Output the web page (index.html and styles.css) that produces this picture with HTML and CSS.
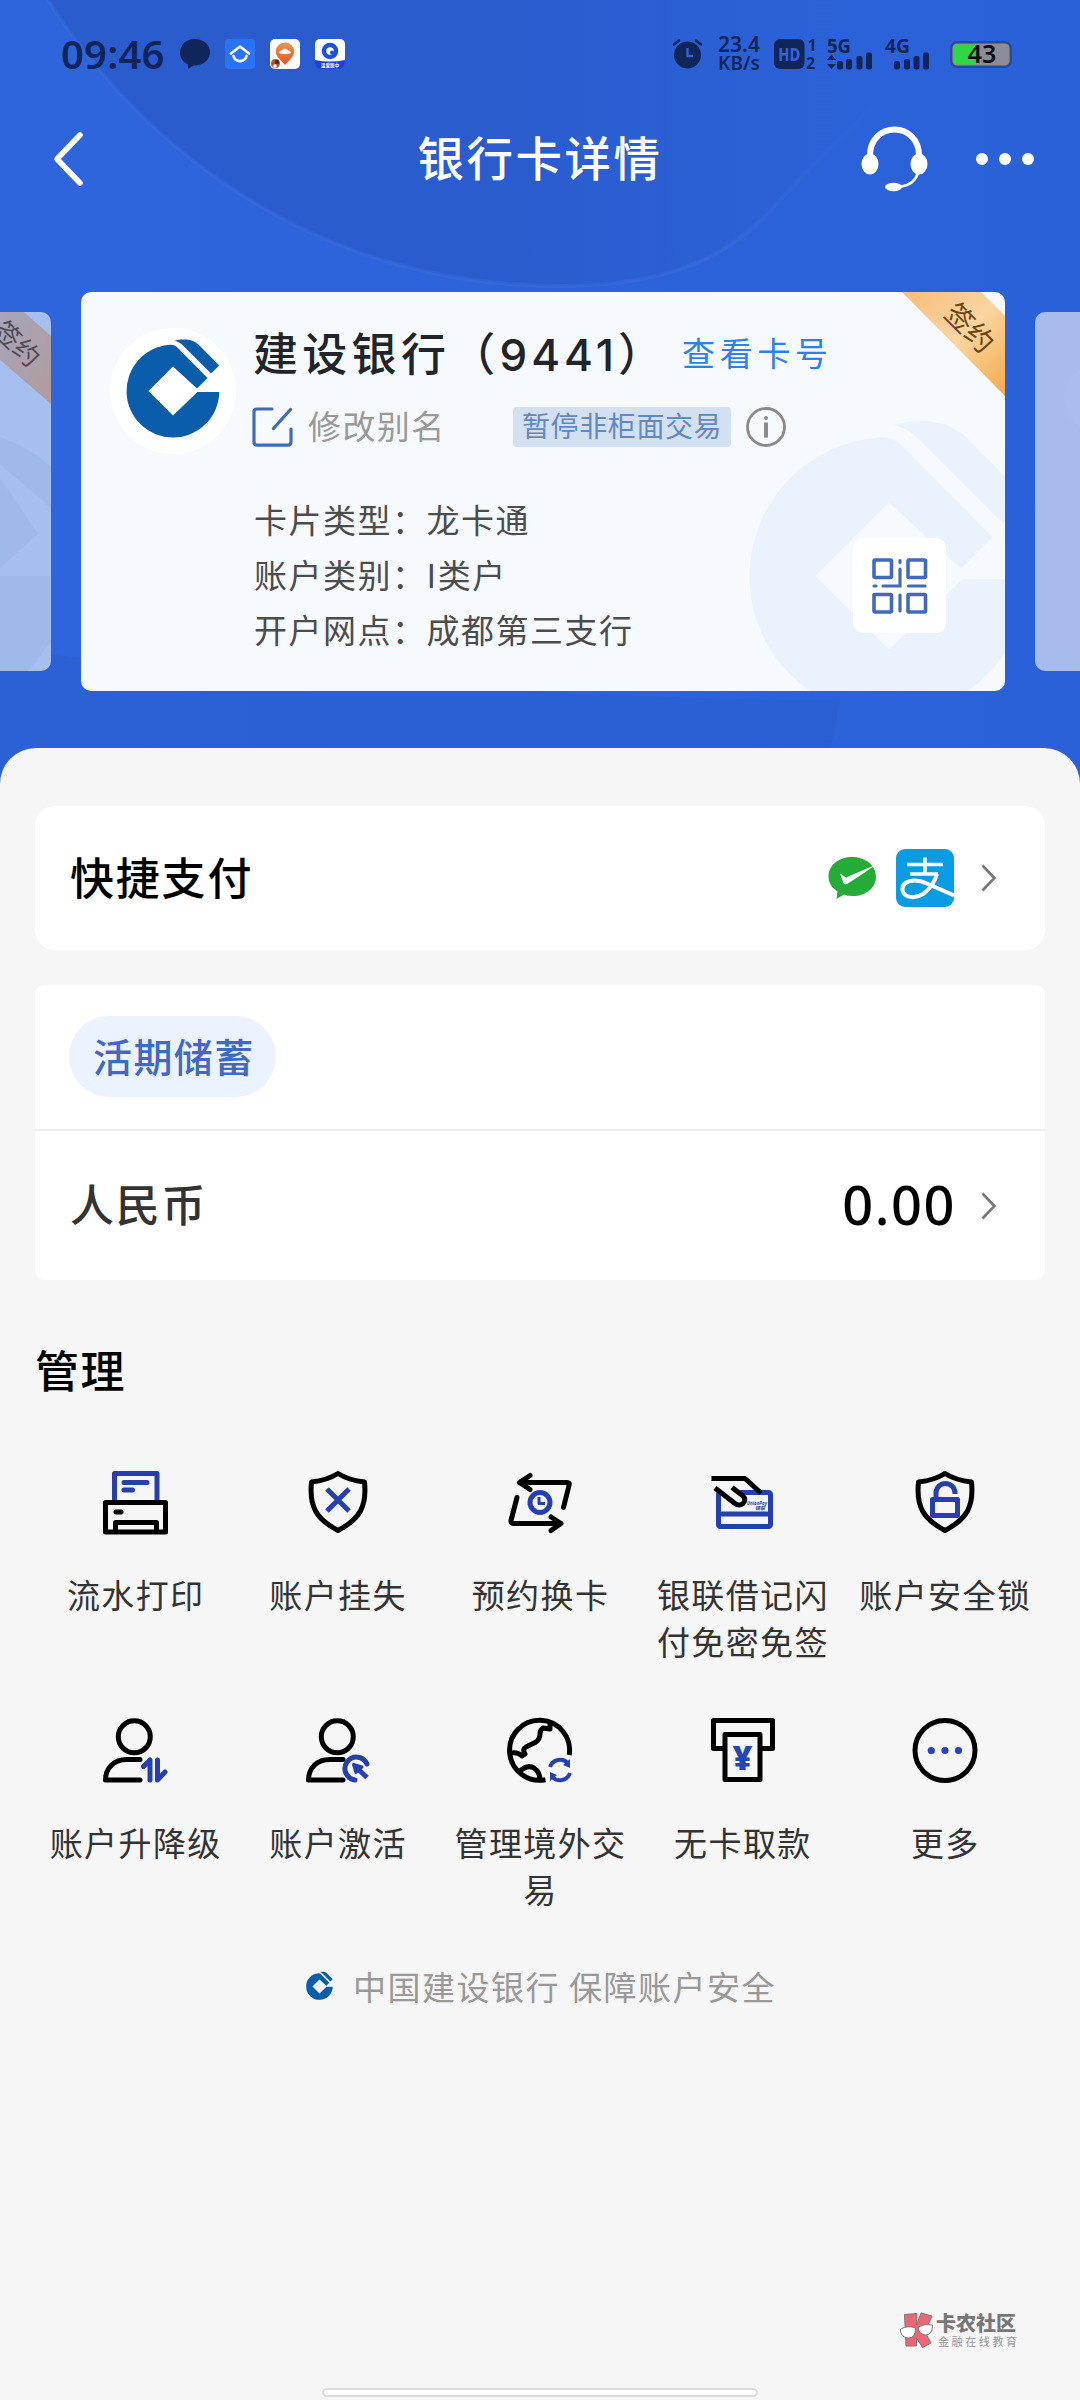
FILE: index.html
```html
<!DOCTYPE html>
<html lang="zh-CN">
<head>
<meta charset="utf-8">
<title>银行卡详情</title>
<link rel="stylesheet" href="styles.css">
</head>
<body>
<svg class="defs" width="0" height="0" aria-hidden="true">
  <defs>
    <linearGradient id="sky" x1="0" x2="1"><stop offset="0" stop-color="#2e65dd"/><stop offset="1" stop-color="#2b61d8"/></linearGradient>
    <linearGradient id="orb" x1="0" x2="1"><stop offset=".55" stop-color="#2a5cce"/><stop offset="1" stop-color="#2a5cce" stop-opacity="0"/></linearGradient>
    <linearGradient id="rim" x1="0" x2="1"><stop offset="0" stop-color="#4674e2" stop-opacity=".25"/><stop offset=".8" stop-color="#4674e2" stop-opacity=".3"/><stop offset="1" stop-color="#4674e2" stop-opacity="0"/></linearGradient>
    <linearGradient id="gold" x1="0" y1="0" x2="1" y2="1"><stop offset="0" stop-color="#f6bc7c"/><stop offset=".5" stop-color="#fbd5a0"/><stop offset="1" stop-color="#f3ab4c"/></linearGradient>
    <linearGradient id="dusk" x1="0" y1="0" x2="1" y2="1"><stop offset="0" stop-color="#a7a5ba"/><stop offset="1" stop-color="#b09c9c"/></linearGradient>
    <linearGradient id="pin" x1="0" y1="0" x2="0" y2="1"><stop offset="0" stop-color="#dd9a58"/><stop offset="1" stop-color="#e8541f"/></linearGradient>
    <symbol id="ccb" viewBox="-54 -54 108 108">
      <path d="M0-24.5-24.5 0 0 24.500 24.500 1H46.300A46.400 46.400 0 1 1-3-46.200C2-46.500 4.500-43.500 7.500-40.200L34.500-13 24-2.500Z"/>
      <path d="M1.500-50.300C5-51.500 9-51.800 13.500-51.500 18.500-51 22-49.500 25.500-46.500L46.200-25.500 38-17.500 10-45.500C7.500-48 5-49.500 1.500-50.300Z"/>
    </symbol>
    <symbol id="shield" viewBox="0 0 72 72">
      <path d="M36 7.500C28 12.500 19 15 9.500 16 7 40 14 53 36 64.500 58 53 65 40 62.500 16 53 15 44 12.500 36 7.500Z"/>
    </symbol>
    <symbol id="user" viewBox="0 0 72 72">
      <circle cx="35.300" cy="22.800" r="16"/><path d="M41 45.500H28C15 45.500 6.500 54 6.500 66H41"/>
    </symbol>
  </defs>
</svg>

<header class="top">
  <svg class="sky" viewBox="0 0 1080 800" width="1080" height="800">
    <rect width="1080" height="800" fill="url(#sky)"/>
    <path d="M48 0C130 130 300 286 560 286 680 286 735 250 775 206 815 160 850 130 880 100V0Z" fill="url(#orb)"/>
    <path d="M48 0C130 130 300 286 560 286 680 286 735 250 775 206 815 160 850 130 880 100" fill="none" stroke="url(#rim)" stroke-width="4"/>
    <path d="M0 650Q500 700 840 700L820 800H0Z" fill="#2a5cce" opacity=".5"/>
  </svg>

  <div class="status">
    <span class="time">09:46</span>
    <svg class="bubble" width="30" height="30" viewBox="0 0 30 30"><path d="M15 0C23.500 0 30 5.800 30 13S24 26.500 13.500 26.500L8 30V25.500C3 23.500 0 18.500 0 13.500 0 5.800 6.500 0 15 0Z" fill="#10265a"/></svg>
    <svg class="app" width="30" height="30" viewBox="0 0 30 30"><rect width="30" height="30" rx="4" fill="#2b73f5"/><path d="M6 14.500 15 7.500 24 14.500M8.500 17A6.700 6.700 0 0 0 21.500 17" fill="none" stroke="#fff" stroke-width="2.600" stroke-linecap="round" stroke-linejoin="round"/></svg>
    <svg class="app" width="30" height="30" viewBox="0 0 30 30"><rect width="30" height="30" rx="5" fill="#fdfdfa"/><path d="M15 3.500A9.300 9.300 0 0 1 24.300 12.500C24.300 18 18 22 15 26 12 22 5.700 18 5.700 12.500A9.300 9.300 0 0 1 15 3.500Z" fill="url(#pin)"/><path d="M9 14c0-2 2-2.500 3-2.500 1-2.500 5-2.500 6 0 2 0 3 1 3 2.500-2 1.500-10 1.500-12 0Z" fill="#fff"/><circle cx="5.500" cy="24.500" r="4.500" fill="#b5572a"/><circle cx="7" cy="23" r="2.200" fill="#4a2a1c"/><circle cx="5" cy="27" r="1.800" fill="#fff"/></svg>
    <svg class="app" width="30" height="30" viewBox="0 0 30 30"><rect width="30" height="28" rx="5" fill="#fff"/><path d="M0 21Q15 24 30 21V25Q28 30 23 30H7Q2 30 0 25Z" fill="#1f3fe0"/><circle cx="15" cy="12" r="6" fill="none" stroke="#1d4fd8" stroke-width="4.500"/><circle cx="17" cy="13.500" r="2" fill="#1d4fd8"/><text x="15" y="28" font-size="4.600" font-weight="700" fill="#fff" text-anchor="middle">温爱医中</text></svg>
    <svg class="alarm" width="29" height="30" viewBox="0 0 29 30"><circle cx="14.500" cy="16" r="13.500" fill="#10265a"/><path d="M1 5.500 6 1.500M28 5.500 23 1.500" stroke="#10265a" stroke-width="2.500" stroke-linecap="round"/><path d="M14.500 9V17H20" fill="none" stroke="#3564cf" stroke-width="2.400"/></svg>
    <div class="rate"><span>23.4</span><span>KB/s</span></div>
    <svg class="hd" width="42" height="30" viewBox="0 0 42 30"><rect width="30.500" height="30" rx="6" fill="#10265a"/><text x="15.200" y="21.500" font-size="18" font-weight="800" fill="#3564cf" text-anchor="middle" textLength="22" lengthAdjust="spacingAndGlyphs">HD</text><g fill="#10265a" font-size="16" font-weight="700"><text x="33.500" y="12">1</text><text x="32" y="29.500">2</text></g></svg>
    <svg class="sig" width="46" height="32" viewBox="0 0 46 32"><text x="0" y="15" font-size="19" font-weight="700" fill="#10265a" textLength="24" lengthAdjust="spacingAndGlyphs">5G</text><g fill="#10265a"><path d="M0 22 4.500 16.500 9 22ZM0 26 4.500 31 9 26Z"/><rect x="10" y="23" width="6" height="8.500" rx="2"/><rect x="19" y="21" width="6" height="10.500" rx="2"/><rect x="29.500" y="18" width="6" height="13.500" rx="2"/><rect x="39" y="14.500" width="6" height="17" rx="2"/></g></svg>
    <svg class="sig" width="46" height="32" viewBox="0 0 46 32"><text x="0" y="15" font-size="19" font-weight="700" fill="#10265a" textLength="25" lengthAdjust="spacingAndGlyphs">4G</text><g fill="#10265a"><rect x="9" y="23" width="6" height="8.500" rx="2"/><rect x="19" y="21" width="6" height="10.500" rx="2"/><rect x="28.500" y="18" width="6" height="13.500" rx="2"/><rect x="38" y="14.500" width="6" height="17" rx="2"/></g></svg>
    <svg class="battery" width="62" height="27" viewBox="0 0 62 27"><rect x="1.200" y="1.200" width="59.600" height="24.600" rx="6" fill="#8b8e98" stroke="#2a4a94" stroke-width="2.400"/><path d="M26 3.500H7A3.500 3.500 0 0 0 3.500 7V20A3.500 3.500 0 0 0 7 23.500H26Z" fill="#2ed843"/><text x="32" y="22" font-size="25" font-weight="600" text-anchor="middle" fill="#0a0d12">43</text></svg>
  </div>

  <nav class="nav">
    <svg width="34" height="56" viewBox="0 0 34 56"><path d="M27 4 4 28 27 52" fill="none" stroke="#fff" stroke-width="5.500" stroke-linecap="round" stroke-linejoin="round"/></svg>
    <h1>银行卡详情</h1>
    <div class="actions">
      <svg width="68" height="66" viewBox="0 0 68 66"><path d="M9 32V29C9 14 20 3.500 33.500 3.500S58 14 58 29V32" fill="none" stroke="#fff" stroke-width="6"/><ellipse cx="9" cy="38" rx="8.500" ry="10.500" fill="#fff"/><ellipse cx="58" cy="38" rx="8.500" ry="10.500" fill="#fff"/><path d="M57 47Q53 59 40 60.500" fill="none" stroke="#fff" stroke-width="2.500"/><ellipse cx="32.500" cy="61" rx="8.500" ry="4.200" fill="#fff"/></svg>
      <svg width="60" height="14" viewBox="0 0 60 14"><g fill="#fff"><circle cx="7" cy="7" r="6"/><circle cx="30" cy="7" r="6"/><circle cx="53" cy="7" r="6"/></g></svg>
    </div>
  </nav>

  <section class="deck">
    <div class="side left">
      <svg width="51" height="359" viewBox="0 0 51 359"><g fill="#9db6e8" opacity=".7"><path d="M0 125Q30 135 51 155V196L0 152ZM0 166 38 222 0 256ZM0 264H51V330L28 359H0Z"/></g><path d="M0 0H24L51 24V92L0 48Z" fill="url(#dusk)"/><text transform="translate(17 32) rotate(44)" x="0" y="9" text-anchor="middle" font-size="26" fill="#4d4a58">签约</text></svg>
    </div>
    <article class="card">
      <svg class="watermark" width="324" height="324"><use href="#ccb" fill="#eaf2fd"/></svg>
      <div class="logo"><svg width="108" height="108"><use href="#ccb" fill="#0a5dab"/></svg></div>
      <div class="info">
        <div class="name"><b>建设银行（<i>9441</i>）</b><a>查看卡号</a></div>
        <div class="alias">
          <svg width="42" height="40" viewBox="0 0 42 40"><path d="M20 2H5Q2 2 2 5V35Q2 38.200 5 38.200H36Q39 38.200 39 35V22M21.500 21.500 38.500 2.500" fill="none" stroke="#4169bd" stroke-width="3.200" stroke-linecap="round"/></svg>
          <span class="rename">修改别名</span>
          <span class="halt">暂停非柜面交易</span>
          <svg width="40" height="40" viewBox="0 0 40 40"><circle cx="20" cy="20" r="18.500" fill="none" stroke="#8a8a8a" stroke-width="2.800"/><path d="M20 15.500V30.500" stroke="#8a8a8a" stroke-width="4"/><circle cx="20" cy="11" r="2" fill="#8a8a8a"/></svg>
        </div>
        <ul class="facts"><li>卡片类型：龙卡通</li><li>账户类别：I类户</li><li>开户网点：成都第三支行</li></ul>
      </div>
      <svg class="ribbon" width="103" height="104" viewBox="0 0 103 104"><path d="M0 0H79L103 24V104Z" fill="url(#gold)"/><text transform="translate(67.500 36) rotate(45)" y="10" text-anchor="middle" font-size="28" fill="#6b4310">签约</text></svg>
      <div class="qr"><svg width="56" height="56" viewBox="0 0 56 56"><g fill="none" stroke="#4169bd" stroke-width="3.600"><rect x="2" y="2" width="17.500" height="17.500" rx="1"/><rect x="36" y="2" width="17.500" height="17.500" rx="1"/><rect x="2" y="36.500" width="17.500" height="17.500" rx="1"/><rect x="36" y="36.500" width="17.500" height="17.500" rx="1"/><path stroke-width="3.200" stroke-linecap="round" d="M28 2.500V4.500M28 11V28H11M4 28H2M36.500 28H53M28 37V53"/></g></svg></div>
    </article>
    <div class="side right"><svg width="45" height="359" viewBox="0 0 45 359"><circle cx="62" cy="86" r="33" fill="#a9beee"/></svg></div>
  </section>
</header>

<main class="sheet">
  <section class="panel pay">
    <h2>快捷支付</h2>
    <div class="pay-icons">
      <svg width="50" height="44" viewBox="0 0 50 44"><path d="M24 1C37 1 48 9 48 20.500S38 40 25 40Q20 40 16 38.500L8.500 43 9.500 35.500C4 32 .500 27 .500 20.500.500 9 11 1 24 1Z" fill="#23ac38"/><path d="M12 17.500 18 21.500 47 9Q44 12 19 28 16.500 29 15.500 27Z" fill="#fff"/></svg>
      <svg width="58" height="58" viewBox="0 0 58 58"><rect width="58" height="58" rx="9" fill="#0a9ce2"/><g fill="none" stroke="#fff" stroke-width="3.600"><path d="M11 15.500H47M29 8.500V24.500M14 25H42"/><path d="M41 25Q37 38 27 45C20 49.500 8 50 6.500 41 6 31 19 29 31 34.500L58 46.500" stroke-width="4"/></g></svg>
    </div>
    <svg class="chev" width="16" height="28" viewBox="0 0 16 28"><path d="M1.500 1.500 13.500 14 1.500 26.500" fill="none" stroke="#777" stroke-width="2.600"/></svg>
  </section>

  <section class="panel account">
    <div class="kind"><span class="pill">活期储蓄</span></div>
    <div class="money"><span class="cur">人民币</span><span class="sum">0.00</span><svg class="chev" width="16" height="28" viewBox="0 0 16 28"><path d="M1.500 1.500 13.500 14 1.500 26.500" fill="none" stroke="#777" stroke-width="2.600"/></svg></div>
  </section>

  <h2 class="manage">管理</h2>
  <ul class="grid">
    <li><svg class="ico" viewBox="0 0 72 72"><g class="b"><path d="M15.500 34V7.500H58V34M25 16.500H48M25 24H33.500"/></g><path d="M6.500 36.500H66.500V66H6.500ZM16.500 66V56.500H57.500V66M17 46H22"/></svg><span>流水打印</span></li>
    <li><svg class="ico" viewBox="0 0 72 72"><use href="#shield"/><path class="b" stroke-linecap="butt" d="M25 23 47 45M47 23 25 45"/></svg><span>账户挂失</span></li>
    <li><svg class="ico" viewBox="0 0 72 72"><path d="M26 9.500 15.500 16.500 26 23.500M16 16.500H63Q66 16.500 65 19.500L59.500 41.500M13 31.500 7 54.500Q6.500 57.500 9.500 57.500H57M47 51 57 57.500 47 64.500"/><circle class="b" cx="36" cy="36.500" r="10"/><path class="b thin" d="M35 31V37.500H41"/></svg><span>预约换卡</span></li>
    <li><svg class="ico" viewBox="0 0 72 72"><g class="b"><rect x="12.500" y="26.500" width="52" height="34" rx="2"/><path d="M12.500 48H64.500"/></g><path d="M9 22 30 37.500Q34 40 37.500 37 41 33 37 29.500L26 21.500 45 18Z" fill="#f6f6f6" stroke="none"/><path stroke-linecap="butt" d="M5.500 12.500H39L55 27M9 22 29 37.500Q33 40.500 37 37.500 41 33.500 36.500 29.500L26 21.500"/><g fill="#263fae" stroke="none" font-size="5.500" font-weight="700" font-style="italic"><text x="41" y="38.500" textLength="20" lengthAdjust="spacingAndGlyphs">UnionPay</text><text x="49" y="44" font-size="5">银联</text></g></svg><span>银联借记闪<br>付免密免签</span></li>
    <li><svg class="ico" viewBox="0 0 72 72"><use href="#shield"/><g class="b"><rect x="23.500" y="33.500" width="25" height="16"/><path stroke-linecap="butt" d="M27 33V27A9.500 9.500 0 0 1 46 27V28"/></g></svg><span>账户安全锁</span></li>
    <li><svg class="ico" viewBox="0 0 72 72"><use href="#user"/><path class="b" d="M44.500 52.500 51 46V66M58.500 46V66L66 58"/></svg><span>账户升降级</span></li>
    <li><svg class="ico" viewBox="0 0 72 72"><use href="#user"/><g class="b"><path d="M65 50A11.500 11.500 0 1 0 53 66"/><path stroke-linecap="butt" d="M65 63.500 57 56"/><path d="M51.500 50.500 60 53 54 58.500Z" fill="#263fae" class="thin"/></g></svg><span>账户激活</span></li>
    <li><svg class="ico" viewBox="0 0 72 72"><path stroke-linecap="butt" d="M65.200 41A30 30 0 1 0 41.500 65.700M46 9V15L39 14Q36 16 36 20 36 26 31 28.500L22 33Q18 35 21 40L18 42Q14 38 7 39M15 58Q23 50 30 54 36 58 36 66"/><g class="b"><path class="arc" d="M46 53A10.500 10.500 0 0 1 64 49.500M66 59A10.500 10.500 0 0 1 48 62.500"/><path d="M66 45V54L59 51ZM46 67V58L53 61Z" fill="#263fae" stroke="none"/></g></svg><span>管理境外交<br>易</span></li>
    <li><svg class="ico" viewBox="0 0 72 72"><path d="M18 34.500H7.500V6.500H66.500V34.500H55M19 20.500H54V65.500H19Z"/><text x="36.500" y="55.500" text-anchor="middle" font-size="34" font-weight="900" fill="#2643b8" stroke="none">¥</text></svg><span>无卡取款</span></li>
    <li><svg class="ico" viewBox="0 0 72 72"><circle cx="36" cy="36.500" r="30"/><g fill="#2643b8" stroke="none"><circle cx="22.300" cy="36.500" r="3.600"/><circle cx="36" cy="36.500" r="3.600"/><circle cx="49.500" cy="36.500" r="3.600"/></g></svg><span>更多</span></li>
  </ul>

  <footer class="foot">
    <svg width="31" height="31"><use href="#ccb" fill="#0a5dab"/></svg>
    <span>中国建设银行 保障账户安全</span>
  </footer>

  <div class="brand">
    <svg width="35" height="37" viewBox="0 0 35 37"><path d="M5.500 2.500 18 1.500 17.500 13 22 1 33 4 26 20 32 31 23.500 35.500 17.500 26V34H7Z" fill="#ee6675" stroke="#777"/><path d="M1.500 17Q9 13 16.500 16 16.500 26 9.500 26 3 26 1.500 19ZM19 15Q26 11 33.500 13 33.500 23 26.500 23 20 22.500 19 15Z" fill="#fff" stroke="#777"/></svg>
    <div class="brand-text"><b>卡农社区</b><span>金融在线教育</span></div>
  </div>
  <div class="homebar"></div>
</main>
</body>
</html>
```
FILE: styles.css
```css
* { box-sizing: border-box; }

body {
  margin: 0;
  width: 1080px;
  height: 2400px;
  overflow: hidden;
  background: #f6f6f6;
  font-family: "Noto Sans CJK SC", sans-serif;
  color: #333;
}

h1, h2 { margin: 0; font-weight: 500; }
ul { margin: 0; padding: 0; list-style: none; }
svg { display: block; flex: none; overflow: hidden; }
.defs { position: absolute; }

.top { position: relative; height: 748px; isolation: isolate; }
.sky { position: absolute; top: 0; left: 0; z-index: -1; }

.status {
  display: flex;
  align-items: center;
  height: 108px;
  padding-left: 61px;
  font-family: "Noto Sans", "Noto Sans CJK SC", sans-serif;
  color: #10265a;
}
.status svg { overflow: visible; }
.time { width: 119px; font-size: 40px; font-weight: 600; letter-spacing: .2px; line-height: 40px; }
.app { margin-left: 15px; }
.alarm { margin-left: 328px; }
.rate {
  width: 48px;
  margin-left: 13px;
  display: flex;
  flex-direction: column;
  align-items: center;
  font-size: 21px;
  font-weight: 600;
  line-height: 19px;
}
.rate span:last-child { font-size: 19px; }
.hd { margin-left: 11px; }
.sig { margin-left: 11px; }
.battery { margin-left: 19px; }
.sig + .sig { margin-left: 12px; }

.nav {
  display: flex;
  align-items: center;
  justify-content: space-between;
  height: 102px;
  padding: 0 45px 0 53px;
}
.nav h1 {
  color: #fff;
  font-size: 46.5px;
  letter-spacing: 2.5px;
  line-height: 60px;
  margin: -6px 0 0 132px;
}
.actions { display: flex; align-items: center; gap: 46px; }

.deck { display: flex; align-items: center; gap: 30px; margin-top: 82px; height: 399px; }
.side { height: 359px; background: #a7bbec; overflow: hidden; flex: none; }
.left { width: 51px; border-radius: 0 10px 10px 0; background: #a7bff0; }
.right { width: 45px; border-radius: 10px 0 0 10px; }

.card {
  position: relative;
  display: flex;
  flex: none;
  gap: 18px;
  width: 924px;
  height: 399px;
  padding: 36px 0 0 29px;
  border-radius: 10px;
  background: #f6faff;
  overflow: hidden;
}
.watermark { position: absolute; left: 646px; top: 122px; }
.logo {
  display: flex;
  align-items: center;
  justify-content: center;
  width: 126px;
  height: 126px;
  border-radius: 50%;
  background: #fff;
  flex: none;
}
.info { flex: 1; }
.name { display: flex; align-items: center; height: 47px; }
.name b { font-weight: 500; font-size: 45px; letter-spacing: 4.3px; color: #212429; white-space: nowrap; width: 428px; margin-left: -1px; margin-right: 1px; }
.name i { font-family: Inter, sans-serif; font-style: normal; font-size: 44px; letter-spacing: 4px; }
.name a { font-size: 33px; letter-spacing: 4.7px; color: #2f80e6; }
.alias { display: flex; align-items: center; height: 40px; margin-top: 32px; margin-left: -2px; }
.rename { width: 205px; margin-left: 14px; font-size: 33px; letter-spacing: 1.4px; line-height: 36px; padding-bottom: 4px; color: #999; }
.halt {
  width: 218px;
  height: 40px;
  margin-right: 15px;
  padding-left: 9px;
  border-radius: 4px;
  background: #d3e0f2;
  color: #6488bd;
  font-size: 28px;
  letter-spacing: .6px;
  line-height: 37px;
  white-space: nowrap;
}
.facts { margin-top: 45px; }
.facts li { height: 55px; font-size: 33px; letter-spacing: 1.5px; line-height: 55px; color: #4c4c4c; }
.ribbon { position: absolute; right: 0; top: 0; }
.qr {
  position: absolute;
  left: 772px;
  top: 246px;
  width: 93px;
  height: 95px;
  border-radius: 10px;
  background: #fff;
  display: flex;
  align-items: center;
  justify-content: center;
}

.sheet {
  position: relative;
  height: 1652px;
  padding: 58px 35px 0;
  border-radius: 36px 36px 0 0;
  background: #f6f6f6;
}
.panel { background: #fff; }
.pay {
  display: flex;
  align-items: center;
  height: 144px;
  padding: 0 48px 0 35px;
  border-radius: 20px;
}
.pay h2 { font-size: 44px; letter-spacing: 1.8px; color: #000; padding-bottom: 5px; }
.pay-icons { display: flex; align-items: center; gap: 18px; margin-left: auto; margin-right: 27px; }
.account { margin-top: 35px; height: 295px; border-radius: 9px; }
.kind { height: 146px; padding: 31px 34px; border-bottom: 2px solid #ececec; }
.pill {
  display: block;
  width: 207px;
  height: 81px;
  padding-left: 24px;
  border-radius: 41px;
  background: #eaf3ff;
  color: #4069bf;
  font-size: 39px;
  font-weight: 500;
  letter-spacing: 1.4px;
  line-height: 79px;
}
.money { display: flex; align-items: center; height: 149px; padding: 0 48px 0 35px; }
.cur { flex: 1; font-size: 44px; letter-spacing: 1.8px; font-weight: 500; padding-bottom: 6px; }
.sum { margin-right: 25px; padding-bottom: 3px; font: 500 54px/60px "Noto Sans", sans-serif; letter-spacing: 1.6px; color: #000; }

.manage { margin-top: 59px; height: 60px; font-size: 44px; line-height: 60px; letter-spacing: 1.6px; color: #000; }
.grid { display: grid; grid-template-columns: repeat(5, 1fr); margin: 67px -1px 0; grid-template-rows: 248px 247px; }
.grid li { display: flex; flex-direction: column; align-items: center; text-align: center; }
.ico { width: 72px; height: 72px; fill: none; stroke: #000; stroke-width: 5; stroke-linejoin: round; stroke-linecap: round; }
.ico .b { stroke: #263fae; }
.ico .thin { stroke-width: 3; stroke-linecap: butt; }
.ico .arc { stroke-width: 4; stroke-linecap: butt; }
.ico text { font-family: "Noto Sans", "Noto Sans CJK SC", sans-serif; }
.grid span { margin-top: 33px; font-size: 33px; letter-spacing: 1.4px; line-height: 47px; margin-right: -1px; }

.foot { display: flex; align-items: center; justify-content: center; gap: 18px; height: 50px; }
.foot span { font-size: 33px; letter-spacing: 1.5px; line-height: 50px; color: #999; }
.brand { display: flex; width: 118px; height: 37px; margin-top: 301px; margin-left: 864px; gap: 2px; }
.brand-text { display: flex; flex-direction: column; color: #777; white-space: nowrap; }
.brand-text b { font-size: 20px; font-weight: 900; line-height: 22px; }
.brand-text span { margin-left: 2px; font-size: 11px; letter-spacing: 2.6px; line-height: 15px; color: #999; }
.homebar { width: 436px; height: 9px; margin: 39px auto 0; border: 2px solid #dcdcdc; border-radius: 5px; background: #fff; }
```
